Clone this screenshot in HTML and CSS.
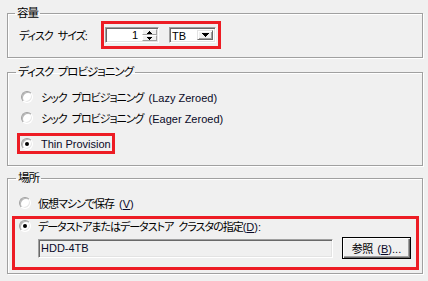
FILE: index.html
```html
<!DOCTYPE html>
<html lang="ja">
<head>
<meta charset="utf-8">
<link rel="stylesheet" href="styles.css">
</head>
<body>
<fieldset class="group g1">
  <legend>容量</legend>
  <div class="size-row">
    <span class="field-label">ディスク サイズ:</span>
    <div class="hl hl-size">
      <div class="spin">
        <span class="spin-value">1</span>
        <div class="spin-btns">
          <span class="spin-btn"><svg width="5" height="3" viewBox="0 0 5 3"><path d="M2 0h1v1h1v1h1v1H0V2h1V1h1z" fill="#000"/></svg></span>
          <span class="spin-btn"><svg width="5" height="3" viewBox="0 0 5 3"><path d="M0 0h5v1H4v1H3v1H2V2H1V1H0z" fill="#000"/></svg></span>
        </div>
      </div>
      <div class="combo">
        <span class="combo-value">TB</span>
        <span class="combo-btn"><svg width="7" height="4" viewBox="0 0 7 4"><path d="M0 0h7v1H6v1H5v1H4v1H3V3H2V2H1V1H0z" fill="#000"/></svg></span>
      </div>
    </div>
  </div>
</fieldset>

<fieldset class="group g2">
  <legend>ディスク プロビジョニング</legend>
  <label class="radio-row ind"><span class="radio"></span><span>シック プロビジョニング <span class="en">(Lazy Zeroed)</span></span></label>
  <label class="radio-row ind gap2"><span class="radio"></span><span>シック プロビジョニング <span class="en">(Eager Zeroed)</span></span></label>
  <div class="hl hl-thin">
    <label class="radio-row thin"><span class="radio checked"></span><span class="en">Thin Provision</span></label>
  </div>
</fieldset>

<fieldset class="group g3">
  <legend>場所</legend>
  <label class="radio-row ind3"><span class="radio"></span><span>仮想マシンで保存 <span class="en">(<u>V</u>)</span></span></label>
  <div class="hl hl-ds">
    <label class="radio-row ds"><span class="radio checked"></span><span>データストアまたはデータストア クラスタの指定<span class="en">(<u>D</u>):</span></span></label>
    <div class="ds-row">
      <div class="textbox"><span class="en">HDD-4TB</span></div>
      <button class="btn" type="button">参照 <span class="en">(<u>B</u>)...</span></button>
    </div>
  </div>
</fieldset>
</body>
</html>
```

FILE: styles.css
```css
html, body {
  margin: 0;
  padding: 0;
}
body {
  background: #f0f0f0;
  padding-top: 6px;
  font-family: "Liberation Sans", "Noto Sans CJK JP", sans-serif;
  font-size: 11px;
  font-feature-settings: "palt";
  letter-spacing: -1px;
  word-spacing: 3px;
  color: #000;
  width: 428px;
  height: 281px;
  box-sizing: border-box;
  overflow: hidden;
}
.en {
  font-family: "Liberation Sans", sans-serif;
  font-size: 11px;
  letter-spacing: 0;
  word-spacing: 0;
  color: #0a0a28;
}
u { text-decoration: underline; }

.group {
  margin: 0 5px 0 7px;
  border: 1px solid #a0a0a0;
  box-shadow: inset 1px 1px #fff, 1px 1px #fff;
  min-width: 0;
}
.group legend {
  padding: 0 2px;
  line-height: 14px;
  height: 14px;
  font-size: 11.5px;
  letter-spacing: -1px;
  word-spacing: 2px;
}

.g1 { padding: 1px 8px 8px 11px; }
.g1 legend { margin-left: -4px; }
.g2 { margin-top: 7px; padding: 10px 8px 11px 9px; }
.g2 legend { margin-left: -1px; }
.g3 { margin-top: 5px; padding: 10px 3px 3px 4px; }
.g3 legend { margin-left: 4px; }

.hl {
  border: 3px solid #ed1c24;
  box-sizing: border-box;
}

.size-row {
  display: flex;
  align-items: center;
}
.field-label {
  width: 82px;
  flex: none;
}
.hl-size {
  width: 120px;
  height: 28px;
  display: flex;
  align-items: center;
  gap: 10px;
  padding: 0 2px 0 1px;
  letter-spacing: 0;
}

.spin, .combo, .textbox {
  box-sizing: border-box;
  border: 1px solid;
  border-color: #a0a0a0 #fff #fff #a0a0a0;
  box-shadow: inset 1px 1px #696969, inset -1px -1px #e3e3e3;
}
.spin {
  width: 54px;
  height: 16px;
  background: #fff;
  display: flex;
  padding: 1px;
}
.spin-value {
  flex: 1;
  text-align: right;
  padding-right: 4px;
  line-height: 12px;
  font-size: 11px;
}
.spin-btns {
  width: 15px;
  display: flex;
  flex-direction: column;
}
.spin-btn {
  flex: 1;
  background: #f0f0f0;
  box-sizing: border-box;
  border: 1px solid;
  border-color: #fff #a0a0a0 #a0a0a0 #fff;
  display: flex;
  align-items: center;
  justify-content: center;
}
.spin-btn svg { display: block; }

.combo {
  width: 47px;
  height: 16px;
  background: #fff;
  display: flex;
  align-items: stretch;
  padding: 2px;
}
.combo-value {
  flex: 1;
  line-height: 12px;
}
.combo-btn {
  width: 16px;
  box-sizing: border-box;
  background: #f0f0f0;
  border: 1px solid;
  border-color: #e3e3e3 #696969 #696969 #e3e3e3;
  box-shadow: inset 1px 1px #fff, inset -1px -1px #a0a0a0;
  display: flex;
  align-items: center;
  justify-content: center;
}
.combo-btn svg { display: block; }

.radio-row {
  display: flex;
  align-items: center;
  gap: 8px;
  height: 16px;
  white-space: nowrap;
}
.ind { margin-left: 4px; }
.gap2 { margin-top: 5px; margin-bottom: 7px; }
.radio {
  width: 12px;
  height: 12px;
  flex: none;
  box-sizing: border-box;
  border-radius: 50%;
  border: 1px solid;
  border-color: #a0a0a0 #fff #fff #a0a0a0;
  box-shadow: inset 1px 1px #b8b8b8, inset -1px -1px #e8e8e8;
  background: #fff;
  display: flex;
  align-items: center;
  justify-content: center;
}
.radio.checked::after {
  content: "";
  width: 4px;
  height: 4px;
  border-radius: 50%;
  background: #000;
}

.hl-thin {
  width: 98px;
  height: 21px;
  display: flex;
  align-items: center;
  padding-left: 1px;
}
.thin { height: 15px; }

.ind3 { margin-left: 7px; gap: 7px; }
.hl-ds {
  margin-top: 5px;
  padding: 0 5px 8px 4px;
}
.ds { height: 14px; gap: 7px; }
.ds-row {
  display: flex;
  align-items: center;
  gap: 9px;
  margin-top: 4px;
  padding-left: 19px;
}
.textbox {
  width: 295px;
  height: 19px;
  background: #f0f0f0;
  display: flex;
  align-items: center;
  padding-left: 2px;
}
.btn {
  width: 69px;
  height: 22px;
  padding: 0;
  background: #f0f0f0;
  border: 1px solid #000;
  box-shadow: inset 1px 1px #fff, inset -1px -1px #696969, inset -2px -2px #a0a0a0;
  font-family: "Liberation Sans", "Noto Sans CJK JP", sans-serif;
  font-size: 11px;
  font-feature-settings: "palt";
  letter-spacing: -0.5px;
  word-spacing: 2px;
  color: #000;
}
```
